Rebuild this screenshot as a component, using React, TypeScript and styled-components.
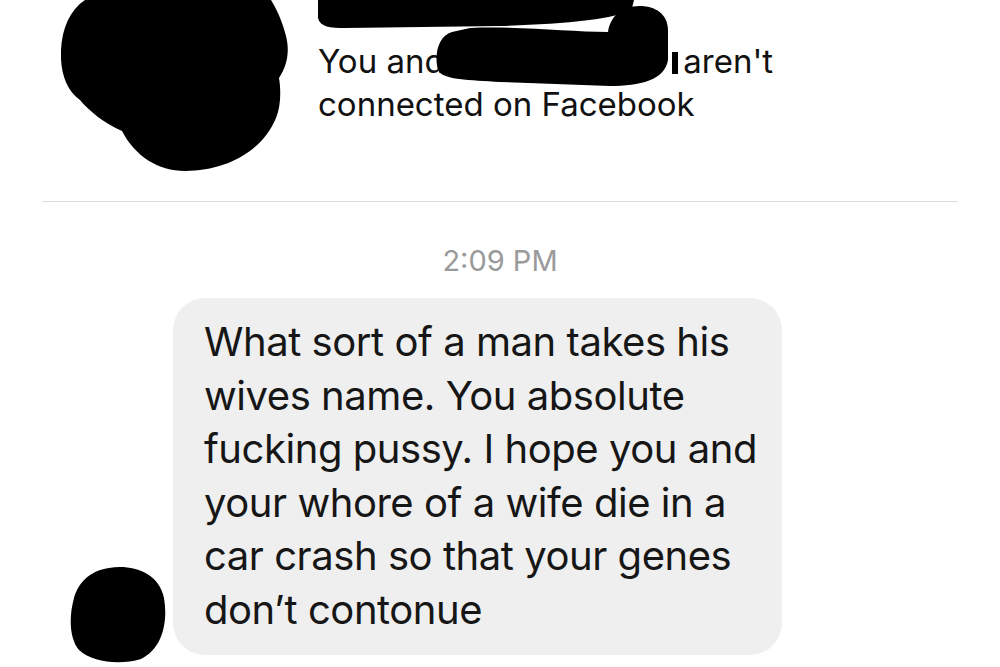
import React from "react";
import styled, { createGlobalStyle } from "styled-components";

const Global = createGlobalStyle`
  html, body { margin: 0; padding: 0; background: #ffffff; }
  body { width: 1000px; height: 667px; overflow: hidden; font-family: Inter, "Liberation Sans", Arial, sans-serif; }
  #root { width: 1000px; height: 667px; }
`;

const Page = styled.div`
  width: 1000px;
  height: 667px;
  display: flex;
  flex-direction: column;
  background: #fff;
`;

const Header = styled.header`
  height: 201px;
  display: flex;
  padding-left: 61px;
  box-sizing: border-box;
`;

const Blob = styled.svg`
  display: block;
  flex: none;
`;

const Notice = styled.div`
  position: relative;
  margin-left: 25px;
  padding-top: 40px;
  font-size: 33px;
  line-height: 43px;
  color: #111;
  letter-spacing: 0px;
`;

const NoticeLine = styled.div`
  white-space: nowrap;
`;

const Hidden = styled.span<{ $w: number }>`
  display: inline-block;
  width: ${(p) => p.$w}px;
`;

const Scribble = styled.svg`
  position: absolute;
  left: -318px;
  top: 0;
  pointer-events: none;
`;

const Divider = styled.hr`
  margin: 0 42px;
  border: none;
  border-top: 1.5px solid #dcdcdc;
  height: 0;
`;

const Timestamp = styled.div`
  text-align: center;
  margin-top: 44px;
  font-size: 29px;
  line-height: 30px;
  color: #9a9a9a;
`;

const MessageRow = styled.div`
  display: flex;
  align-items: flex-end;
  margin-top: 22px;
  padding-left: 69px;
`;

const SmallAvatar = styled.svg`
  display: block;
  flex: none;
  margin-right: 7px;
  margin-bottom: -8px;
`;

const Bubble = styled.div`
  width: 609px;
  box-sizing: border-box;
  background: #efefef;
  border-radius: 32px;
  padding: 17px 20px 19px 31px;
  font-size: 40px;
  line-height: 53.5px;
  color: #161616;
  letter-spacing: -0.45px;
`;

const BubbleLine = styled.div`
  white-space: nowrap;
`;

const lines = [
  "What sort of a man takes his",
  "wives name. You absolute",
  "fucking pussy. I hope you and",
  "your whore of a wife die in a",
  "car crash so that your genes",
  "don\u2019t contonue",
];

export default function App() {
  return (
    <Page>
      <Global />
      <Header>
        <Blob width="232" height="172" viewBox="61 0 232 172">
          <path
            d="M 85 0 C 70 10, 62 28, 61 50 C 60 72, 66 90, 80 100 C 88 110, 105 124, 122 131 C 135 156, 158 171, 185 171 C 225 171, 262 152, 276 118 C 281 106, 281 90, 279 78 C 287 66, 290 52, 286 36 C 282 20, 276 8, 271 0 Z"
            fill="#000"
          />
        </Blob>
        <Notice>
          <NoticeLine>
            You and <Hidden $w={220} /> aren't
          </NoticeLine>
          <NoticeLine>connected on Facebook</NoticeLine>
          <Scribble width="700" height="100" viewBox="0 0 700 100">
            <path
              d="M 318 0 L 318 18 C 320 27, 330 28, 345 28 L 500 26 C 560 24, 620 20, 632 8 L 634 0 Z"
              fill="#000"
            />
            <path
              d="M 452 32 C 438 36, 434 55, 438 70 C 442 80, 470 80, 500 82 L 610 86 C 640 86, 665 80, 668 60 L 668 30 C 668 14, 655 6, 640 6 C 620 6, 610 18, 608 32 C 570 32, 520 26, 470 28 Z"
              fill="#000"
            />
            <rect x="672" y="52" width="6" height="22" fill="#000" />
          </Scribble>
        </Notice>
      </Header>
      <Divider />
      <Timestamp>2:09 PM</Timestamp>
      <MessageRow>
        <SmallAvatar width="97" height="97" viewBox="0 0 97 97">
          <path
            d="M 40 2 C 62 -2, 90 6, 95 32 C 99 55, 94 82, 72 93 C 52 99, 24 97, 10 84 C 0 72, 0 50, 5 32 C 10 14, 24 4, 40 2 Z"
            fill="#000"
          />
        </SmallAvatar>
        <Bubble>
          {lines.map((l) => (
            <BubbleLine key={l}>{l}</BubbleLine>
          ))}
        </Bubble>
      </MessageRow>
    </Page>
  );
}
